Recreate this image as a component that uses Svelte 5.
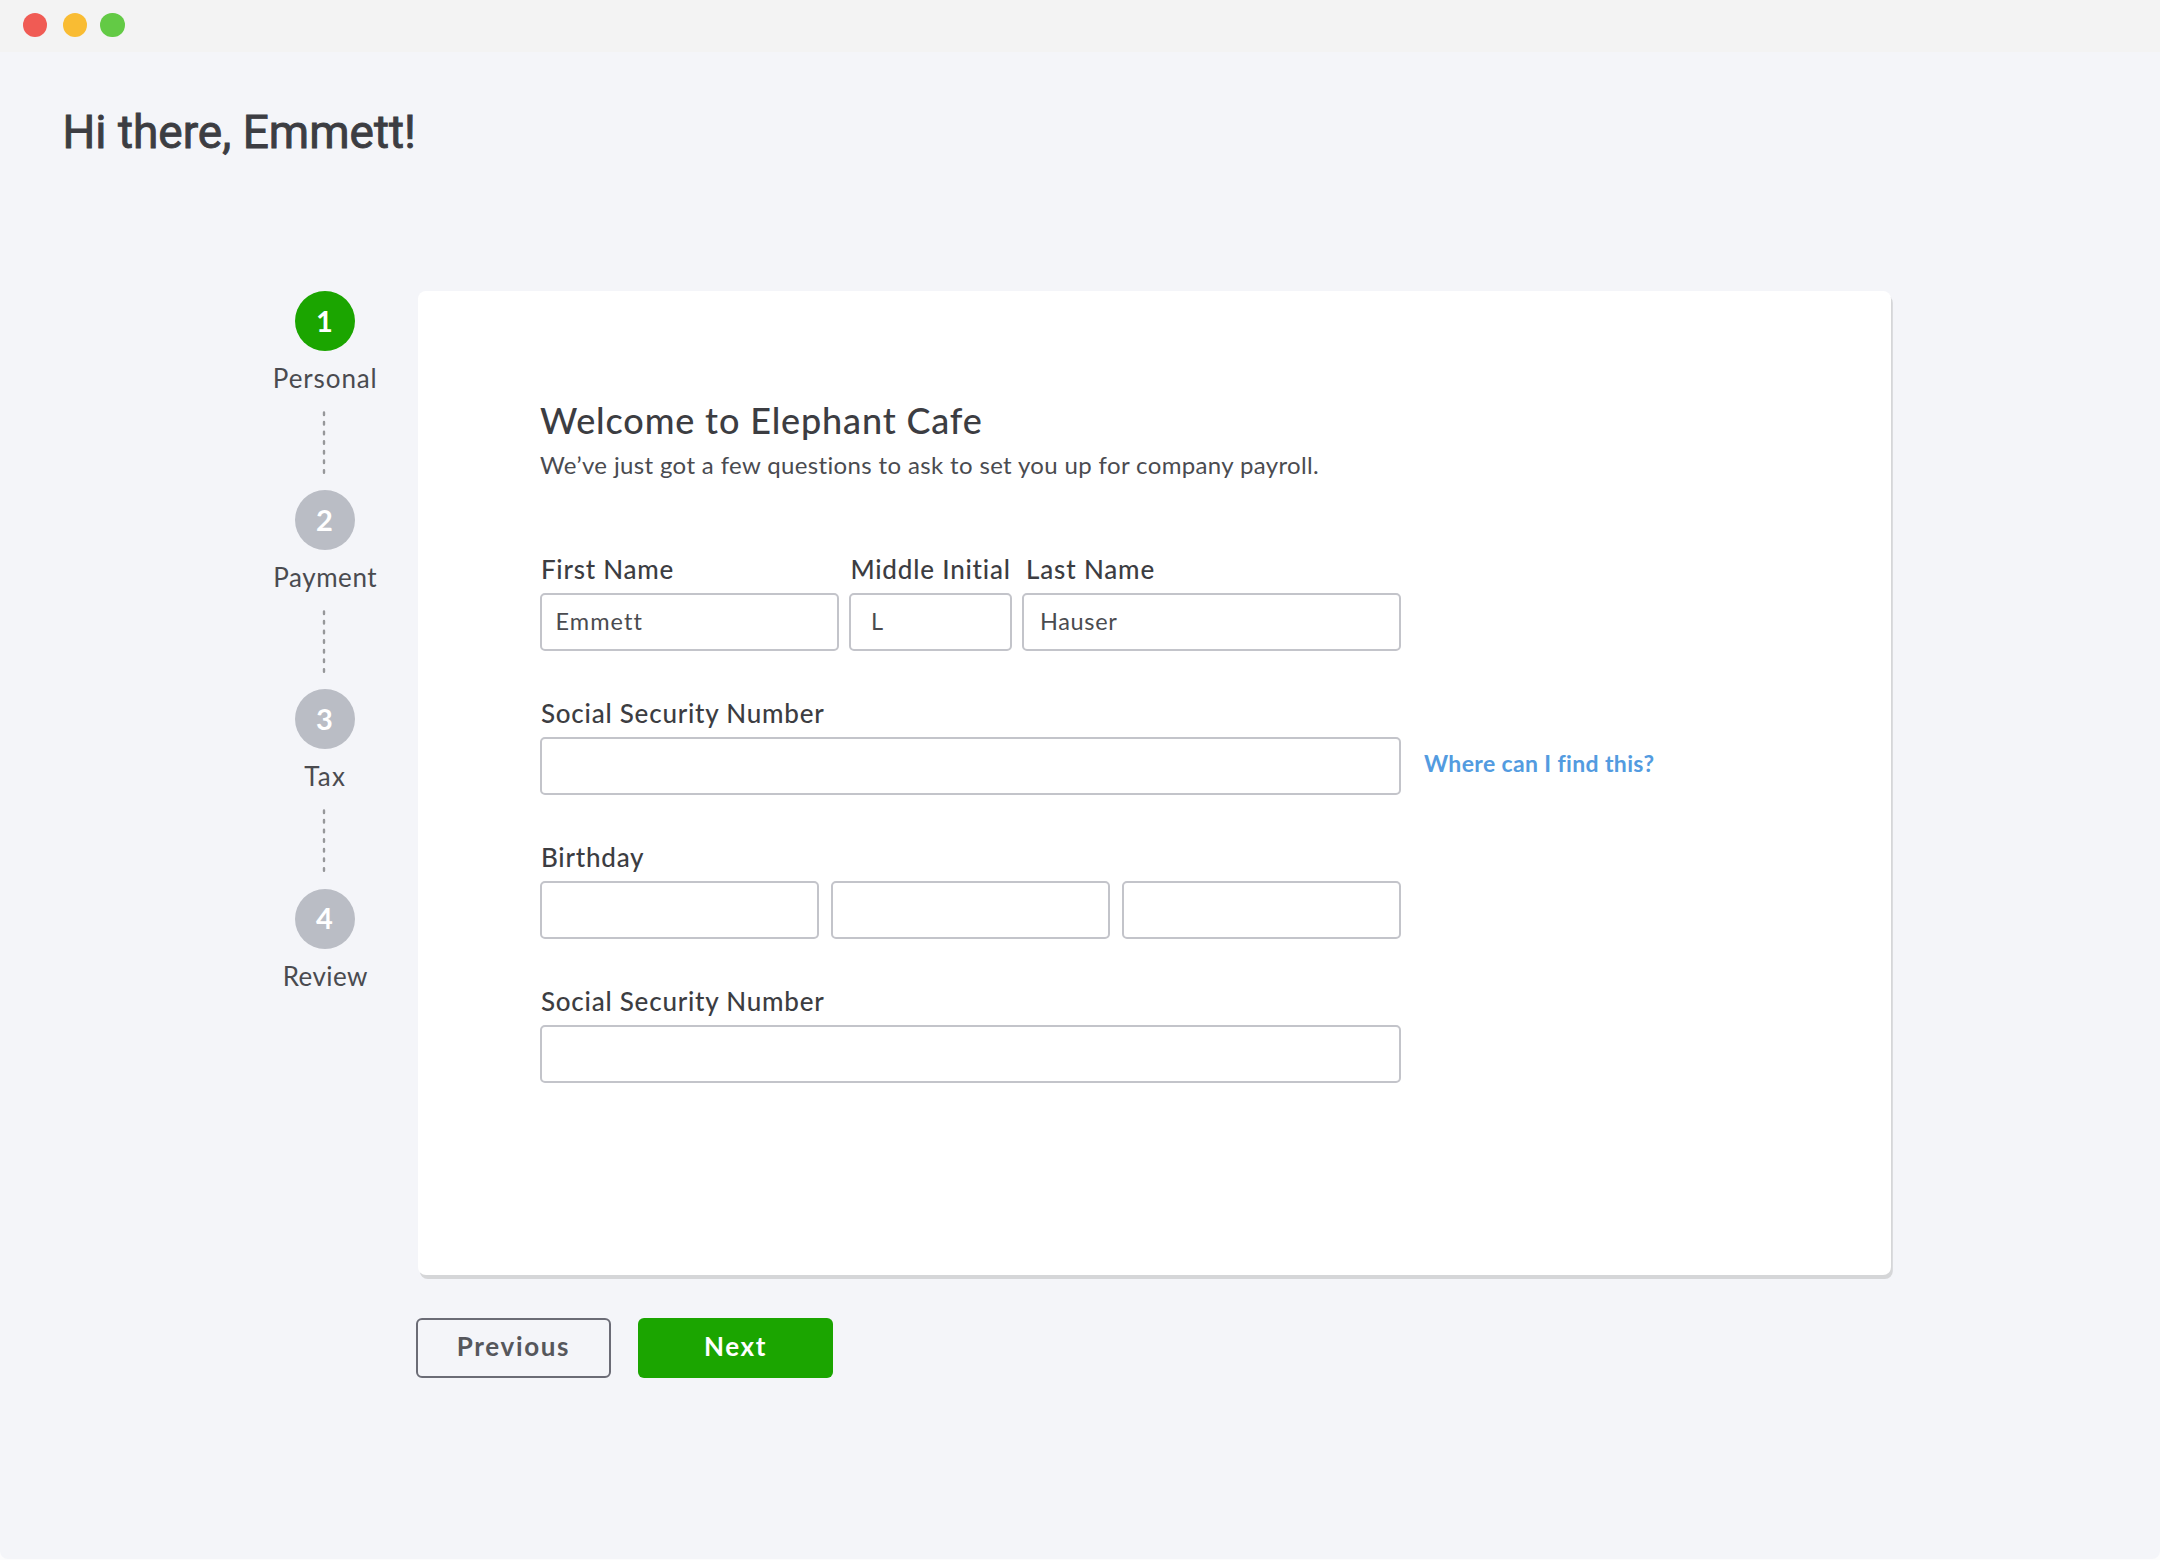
<script>
  const steps = ['Personal', 'Payment', 'Tax', 'Review'];
  const current = 0;
  let first = $state('Emmett');
  let middle = $state('L');
  let last = $state('Hauser');
</script>

<div class="window">
  <header class="titlebar">
    <span class="light red"></span>
    <span class="light yellow"></span>
    <span class="light green"></span>
  </header>

  <main class="page">
    <h1>Hi there, Emmett!</h1>

    <div class="layout">
      <ol class="steps">
        {#each steps as step, i}
          <li class="step">
            <span class="number" class:active={i === current}>{i + 1}</span>
            <span class="name {step.toLowerCase()}">{step}</span>
            {#if i < steps.length - 1}
              <svg class="connector" width="4" height="64" viewBox="0 0 4 64">
                <line x1="2" y1="1.4" x2="2" y2="62.8" />
              </svg>
            {/if}
          </li>
        {/each}
      </ol>

      <div class="content">
        <section class="card">
          <h2>Welcome to Elephant Cafe</h2>
          <p class="intro">We’ve just got a few questions to ask to set you up for company payroll.</p>

          <form class="form">
            <div class="row names">
              <label class="field"><span class="label">First Name</span><input bind:value={first} /></label>
              <label class="field middle"><span class="label">Middle Initial</span><input bind:value={middle} /></label>
              <label class="field last"><span class="label">Last Name</span><input bind:value={last} /></label>
            </div>

            <div class="row with-help">
              <label class="field wide"><span class="label">Social Security Number</span><input /></label>
              <a class="help" href="#help">Where can I find this?</a>
            </div>

            <div class="field wide">
              <span class="label">Birthday</span>
              <div class="row birthday">
                <input aria-label="Month" />
                <input aria-label="Day" />
                <input aria-label="Year" />
              </div>
            </div>

            <label class="field wide"><span class="label">Social Security Number</span><input /></label>
          </form>
        </section>

        <div class="actions">
          <button class="btn previous" type="button">Previous</button>
          <button class="btn next" type="button">Next</button>
        </div>
      </div>
    </div>
  </main>
</div>

<style>
  :global(body) {
    background: #fcfcfd;
  }

  .window {
    box-sizing: border-box;
    width: 2160px;
    height: 1558.5px;
    background: #f4f5f9;
    border-radius: 0 0 8px 8px;
    overflow: hidden;
    color: #3c3d42;
    font-family: Lato, 'Liberation Sans', sans-serif;
  }

  .titlebar {
    display: flex;
    align-items: center;
    box-sizing: border-box;
    height: 52px;
    padding: 0 0 2px 23px;
    background: #f3f3f3;
  }

  .light {
    width: 24.4px;
    height: 24.4px;
    border-radius: 50%;
  }

  .red { background: #f05b54; }
  .yellow { margin-left: 15.3px; background: #f9bc33; }
  .green { margin-left: 13.4px; background: #63ca45; }

  .page {
    padding-top: 52px;
  }

  h1 {
    margin: 0;
    padding-left: 62.5px;
    font: 400 46px/56px Roboto, sans-serif;
    letter-spacing: 0;
    -webkit-text-stroke: 0.9px #3c3d42;
  }

  .layout {
    display: flex;
    padding-top: 131px;
  }

  .steps {
    display: flex;
    flex-direction: column;
    width: 156.5px;
    margin: 0 14px 0 247px;
    padding: 0;
    list-style: none;
  }

  .step {
    display: flex;
    flex-direction: column;
    align-items: center;
    height: 199.2px;
  }

  .number {
    display: flex;
    align-items: center;
    justify-content: center;
    box-sizing: border-box;
    width: 60px;
    height: 60px;
    padding: 0 1.5px 2px 0;
    border-radius: 50%;
    background: #babdc5;
    color: #fff;
    font-size: 29px;
    font-weight: 700;
  }

  .number.active {
    background: #1ba500;
  }

  .name {
    margin-top: 11px;
    color: #4a4b50;
    font-size: 26px;
    line-height: 32px;
    letter-spacing: 0.9px;
  }

  .payment { letter-spacing: 0.55px; }
  .tax { letter-spacing: 1.3px; }
  .review { letter-spacing: 0.4px; }

  .connector {
    margin: 15.5px 2px 0 0;
  }

  .connector line {
    stroke: #96979a;
    stroke-width: 2.4;
    stroke-linecap: round;
    stroke-dasharray: 2.6 7.02;
    stroke-dashoffset: -1;
  }

  .card {
    box-sizing: border-box;
    width: 1473.5px;
    height: 983.5px;
    padding: 107px 0 0 122.5px;
    border-radius: 8px;
    background: #fff;
    box-shadow: 1.8px 4px 0 #d5d6d8;
  }

  h2 {
    margin: 0;
    font-size: 36px;
    font-weight: 500;
    line-height: 44px;
    letter-spacing: 0.85px;
  }

  .intro {
    margin: 8px 0 73px;
    color: #4a4b50;
    font-size: 24px;
    line-height: 30px;
    letter-spacing: 0.36px;
  }

  .form {
    display: flex;
    flex-direction: column;
    gap: 46px;
  }

  .row {
    display: flex;
  }

  .names {
    display: grid;
    grid-template-columns: 299px 163px 379px;
    column-gap: 10px;
    width: 861px;
  }

  .field {
    display: flex;
    flex-direction: column;
    gap: 8px;
  }

  .wide {
    width: 861px;
  }

  .label {
    padding-left: 0.9px;
    font-size: 26px;
    font-weight: 500;
    line-height: 32px;
    letter-spacing: 0.78px;
  }

  .middle .label {
    padding-left: 1.4px;
    letter-spacing: 0.8px;
  }

  .last .label {
    padding-left: 4px;
    letter-spacing: 0.85px;
  }

  input {
    box-sizing: border-box;
    width: 100%;
    min-width: 0;
    height: 58px;
    margin: 0;
    padding: 0 15px 3px 13.5px;
    border: 2px solid #c3c4ca;
    border-radius: 5px;
    outline: none;
    background: #fff;
    color: #4a4b50;
    font: 400 23.5px/30px Lato, sans-serif;
    letter-spacing: 1.05px;
  }

  .middle input {
    padding-left: 20px;
  }

  .last input {
    padding-left: 16px;
    letter-spacing: 0.65px;
  }

  .with-help {
    align-items: flex-end;
    gap: 23px;
  }

  .help {
    padding-bottom: 20.5px;
    color: #539be0;
    font-size: 23px;
    font-weight: 700;
    line-height: 24px;
    letter-spacing: 0.36px;
    text-decoration: none;
  }

  .birthday {
    gap: 12.5px;
  }

  .actions {
    display: flex;
    gap: 27px;
    padding-top: 43.5px;
    margin-left: -1.5px;
  }

  .btn {
    box-sizing: border-box;
    width: 195px;
    height: 60px;
    padding: 0 0 5px 0;
    border: 0;
    border-radius: 6px;
    font: 700 26px/32px Lato, sans-serif;
    letter-spacing: 1.65px;
  }

  .previous {
    border: 2px solid #6b6c76;
    background: transparent;
    color: #56575c;
  }

  .next {
    background: #1ba500;
    color: #fff;
  }
</style>
